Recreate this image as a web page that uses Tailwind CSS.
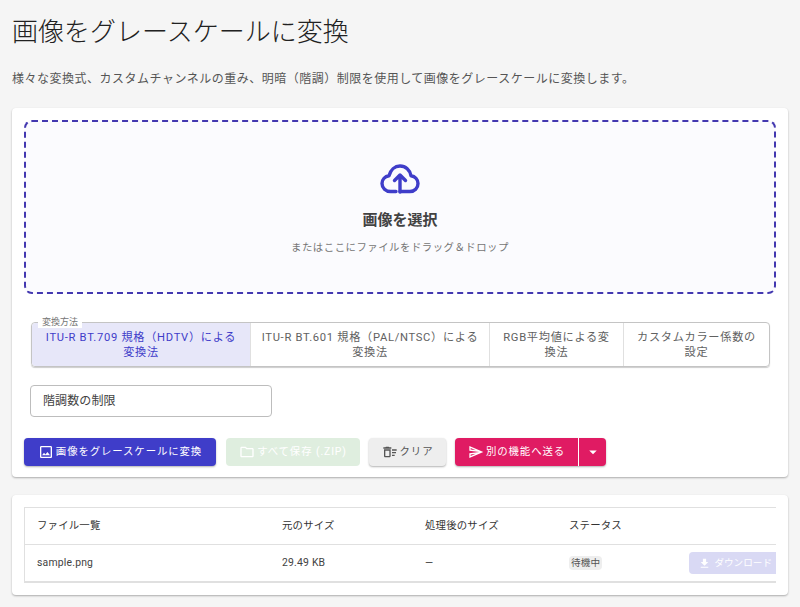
<!DOCTYPE html>
<html lang="ja">
<head>
  <meta charset="UTF-8">
  <title>画像をグレースケールに変換</title>
  <script src="https://cdn.jsdelivr.net/npm/@tailwindcss/browser@4"></script>
</head>
<body class="bg-[#f5f5f5] h-[607px] overflow-hidden font-['Roboto','Noto_Sans_CJK_JP',sans-serif] text-[#212121]">
  <div class="px-3">
    <h1 class="pt-[14px] h-[46px] text-[26px] leading-[36px] font-light">画像をグレースケールに変換</h1>
    <p class="mt-[21px] h-[41px] text-[12px] leading-[24px] text-[#555] tracking-[0.5px]">様々な変換式、カスタムチャンネルの重み、明暗（階調）制限を使用して画像をグレースケールに変換します。</p>

    <!-- 入力カード -->
    <div class="bg-white rounded shadow-[0_1px_2px_rgba(0,0,0,0.3)] p-3 h-[369px]">
      <div class="h-[174px] rounded-lg border-2 border-dashed border-[#4338b0] bg-[#fbfbfe] flex flex-col items-center pt-[42px]">
        <svg class="w-[40px] h-[30px] text-[#3f3dc9]" viewBox="0 0 40 30" fill="none" stroke="currentColor" stroke-width="3.4" stroke-linejoin="round" stroke-linecap="round">
          <path d="M16 27.5H10.5C5.8 27.5 2 24 2 19.5C2 15.5 5 12.3 9 11.7C10.5 6 14.8 2 20 2C25.6 2 30 6 31 11.7C35 12.3 38 15.5 38 19.5C38 24 34.5 27.5 30 27.5H20"/>
          <path d="M20 28V12M14.5 16.5L20 11L25.5 16.5"/>
        </svg>
        <div class="mt-[14px] text-[15px] leading-[24px] font-bold text-[#424242]">画像を選択</div>
        <div class="mt-[6px] text-[10.4px] leading-[20px] text-[#757575] tracking-[0.5px]">またはここにファイルをドラッグ＆ドロップ</div>
      </div>

      <!-- 変換方法 -->
      <div class="relative mt-[28px] ml-[7px] w-[739px] h-[45px] flex rounded border border-[#c4c4c4] shadow-[0_1px_1px_rgba(0,0,0,0.2)] text-[11.2px] leading-[15px] tracking-[0.7px] text-center text-[#616161]">
        <span class="absolute -top-[7px] left-[6px] bg-white px-1 text-[9px] leading-[12px] tracking-normal text-[#757575]">変換方法</span>
        <div class="w-[218px] flex items-center justify-center px-2 bg-[#e7e7f9] text-[#3f3dc9] rounded-l">ITU-R BT.709 規格（HDTV）による変換法</div>
        <div class="w-[239px] flex items-center justify-center px-2 border-l border-[#e0e0e0]">ITU-R BT.601 規格（PAL/NTSC）による変換法</div>
        <div class="w-[134px] flex items-center justify-center px-3 border-l border-[#e0e0e0]">RGB平均値による変換法</div>
        <div class="flex-1 flex items-center justify-center px-3 border-l border-[#e0e0e0]">カスタムカラー係数の設定</div>
      </div>

      <!-- 階調数 -->
      <div class="mt-[18px] ml-[6px] w-[242px] h-[32px] rounded border border-[#bdbdbd] flex items-center px-3 text-[12px] text-[#424242] tracking-[0.1px]">階調数の制限</div>

      <!-- ボタン -->
      <div class="mt-[21px] flex items-center h-[28px] text-[10.4px] tracking-[0.9px]">
        <button class="w-[192px] h-full rounded bg-[#3f3dc9] text-white flex items-center justify-center gap-[2px] shadow-[0_1px_2px_rgba(0,0,0,0.3)]">
          <svg class="w-4 h-4" viewBox="0 0 24 24" fill="currentColor"><path d="M19 5v14H5V5zm0-2H5c-1.1 0-2 .9-2 2v14c0 1.1.9 2 2 2h14c1.1 0 2-.9 2-2V5c0-1.1-.9-2-2-2m-4.86 8.86-3 3.87L9 13.14 6 17h12z"/></svg>
          画像をグレースケールに変換
        </button>
        <button class="ml-[10px] w-[134px] h-full rounded bg-[#dfeedf] text-white flex items-center justify-center gap-[2px]">
          <svg class="w-4 h-4" viewBox="0 0 24 24" fill="currentColor"><path d="M20 6h-8l-2-2H4c-1.1 0-2 .9-2 2v12c0 1.1.9 2 2 2h16c1.1 0 2-.9 2-2V8c0-1.1-.9-2-2-2m0 12H4V6h5.17l2 2H20z"/></svg>
          すべて保存 (.ZIP)
        </button>
        <button class="ml-[9px] w-[77px] h-full rounded bg-[#eeeeee] text-[#555] flex items-center justify-center gap-[2px] shadow-[0_1px_2px_rgba(0,0,0,0.3)]">
          <svg class="w-4 h-4" viewBox="0 0 24 24" fill="currentColor"><path d="M15 16h4v2h-4zm0-8h7v2h-7zm0 4h6v2h-6zM3 18c0 1.1.9 2 2 2h6c1.1 0 2-.9 2-2V8H3zm2-8h6v8H5zm5-6H6L5 5H2v2h12V5h-3z"/></svg>
          クリア
        </button>
        <div class="ml-[9px] h-full flex rounded bg-[#e01b63] text-white shadow-[0_1px_2px_rgba(0,0,0,0.3)]">
          <button class="w-[124px] h-full flex items-center justify-center gap-[2px] border-r border-white">
            <svg class="w-4 h-4" viewBox="0 0 24 24" fill="currentColor"><path d="m4.01 6.03 7.51 3.22-7.52-1zm7.5 8.72L4 17.97v-2.22zM2.01 3 2 10l15 2-15 2 .01 7L23 12z"/></svg>
            別の機能へ送る
          </button>
          <button class="w-[27px] h-full flex items-center justify-center">
            <svg class="w-[18px] h-[18px]" viewBox="0 0 24 24" fill="currentColor"><path d="m7 10 5 5 5-5z"/></svg>
          </button>
        </div>
      </div>
    </div>

    <!-- ファイル一覧 -->
    <div class="mt-[18px] bg-white rounded shadow-[0_1px_2px_rgba(0,0,0,0.3)] p-3 h-[100px]">
      <div class="h-[76px] border border-[#e0e0e0] border-b-2 border-r-0 overflow-hidden text-[10.4px] tracking-[0.2px] text-[#424242]">
        <div class="h-[37px] flex items-center border-b border-[#e0e0e0] text-[#333]">
          <div class="w-[244px] pl-[12px]">ファイル一覧</div>
          <div class="w-[143px] pl-[13px]">元のサイズ</div>
          <div class="w-[144px] pl-[13px]">処理後のサイズ</div>
          <div class="flex-1 pl-[13px]">ステータス</div>
        </div>
        <div class="h-[36px] flex items-center">
          <div class="w-[244px] pl-[12px]">sample.png</div>
          <div class="w-[143px] pl-[13px]">29.49 KB</div>
          <div class="w-[144px] pl-[13px]">—</div>
          <div class="flex-1 pl-[13px]"><span class="inline-block rounded bg-[#eeeeee] px-[2px] text-[9.6px] leading-[14px] text-[#555]">待機中</span></div>
          <button class="w-[87px] h-[22px] rounded-l bg-[#d9d9f4] text-white text-[9.6px] tracking-normal flex items-center justify-end gap-[3px] pr-[4px] shrink-0">
            <svg class="w-[13px] h-[13px]" viewBox="0 0 24 24" fill="currentColor"><path d="M19 9h-4V3H9v6H5l7 7zM5 18v2h14v-2z"/></svg>
            ダウンロード
          </button>
        </div>
      </div>
    </div>
  </div>
</body>
</html>
